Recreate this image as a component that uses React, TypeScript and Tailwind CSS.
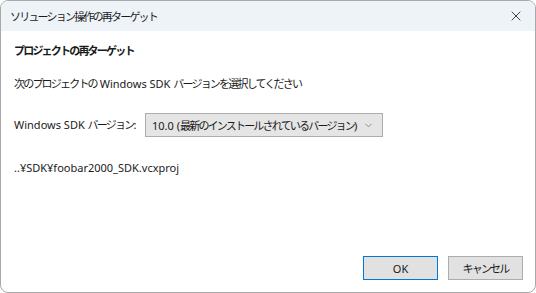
import { X, ChevronDown } from "lucide-react";

const FONT = { fontFamily: '"Noto Sans", "Noto Sans CJK JP", sans-serif' };

// Japanese runs get tighter tracking to match the narrow UI font of the dialog
function T({ text }: { text: string }) {
  const parts = text.split(/([\u3000-\u30ff\u4e00-\u9fff\uff00-\uffef]+)/);
  return (
    <>
      {parts.map((p, i) =>
        i % 2 === 1 ? (
          <span key={i} className="tracking-[-1.8px]">{p}</span>
        ) : (
          <span key={i}>{p}</span>
        )
      )}
    </>
  );
}

export default function App() {
  return (
    <div className="w-[536px] h-[293px] bg-white" style={FONT}>
      <div className="w-full h-full flex flex-col rounded-[8px] border border-[#a9a9a9] overflow-hidden bg-white text-[11px] text-[#1a1a1a]">
        {/* Title bar */}
        <div className="h-[30px] shrink-0 flex items-center justify-between bg-[#eef3f8] pl-[9px] pr-[11px]">
          <span className="leading-none text-[#1b1b1b]"><T text="ソリューション操作の再ターゲット" /></span>
          <X size={16} strokeWidth={1.3} className="text-[#222]" />
        </div>

        {/* Body */}
        <div className="flex-1 flex flex-col pl-[13px] pr-[12px]">
          <p className="mt-[12px] font-bold leading-[16px]"><T text="プロジェクトの再ターゲット" /></p>
          <p className="mt-[17px] leading-[16px]"><T text="次のプロジェクトの Windows SDK バージョンを選択してください" /></p>

          <div className="mt-[21px] flex items-center gap-[8px]">
            <span className="leading-[16px] whitespace-nowrap w-[123px]"><T text="Windows SDK バージョン:" /></span>
            <div className="w-[238px] h-[24px] flex items-center justify-between border border-[#adadad] bg-[#e5e5e5] pl-[6px] pr-[8px]">
              <span className="leading-none whitespace-nowrap"><T text="10.0 (最新のインストールされているバージョン)" /></span>
              <ChevronDown size={11} strokeWidth={1.5} className="text-[#666]" />
            </div>
          </div>

          <p className="mt-[23px] leading-[16px]">..¥SDK¥foobar2000_SDK.vcxproj</p>

          <div className="mt-auto mb-[12px] flex justify-end gap-[10px]">
            <button className="w-[75px] h-[24px] border border-[#0078d7] bg-[#e1e1e1] leading-none">OK</button>
            <button className="w-[75px] h-[24px] border border-[#adadad] bg-[#e1e1e1] leading-none"><T text="キャンセル" /></button>
          </div>
        </div>
      </div>
    </div>
  );
}
